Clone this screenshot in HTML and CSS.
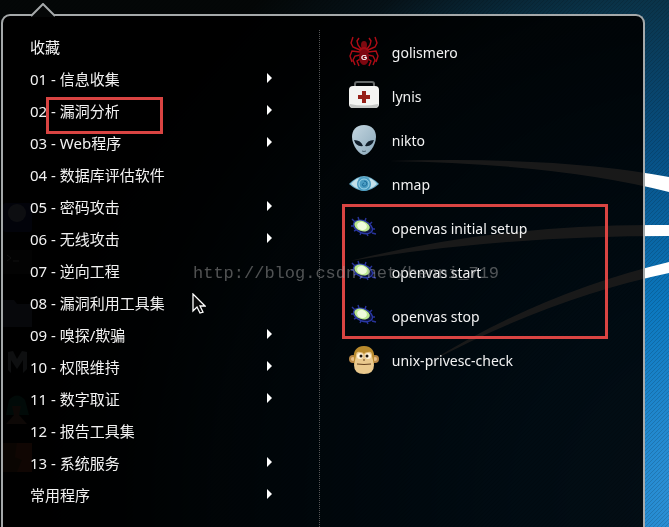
FILE: index.html
```html
<!DOCTYPE html>
<html lang="zh-CN">
<head>
  <meta charset="UTF-8" />
  <meta name="viewport" content="width=device-width, initial-scale=1" />
  <title>应用程序</title>
  <link rel="stylesheet" href="styles.css">
</head>
<body>

<!-- desktop wallpaper and the dock behind the menu -->
<svg class="wallpaper" viewBox="0 0 669 527" preserveAspectRatio="xMidYMid slice" aria-hidden="true">
  <defs>
    <radialGradient id="sky" gradientUnits="userSpaceOnUse" cx="720" cy="500" r="680">
      <stop offset="0" stop-color="#3597dc" />
      <stop offset="0.3" stop-color="#0b78bf" />
      <stop offset="0.52" stop-color="#075084" />
      <stop offset="0.74" stop-color="#0a344a" />
      <stop offset="0.88" stop-color="#061218" />
      <stop offset="1" stop-color="#040707" />
    </radialGradient>
    <pattern id="weave" width="4" height="4" patternUnits="userSpaceOnUse">
      <path d="M-1 1L1-1M0 4L4 0M3 5L5 3" stroke="#000" stroke-opacity="0.15" />
    </pattern>
  </defs>
  <rect width="669" height="527" fill="url(#sky)" />
  <rect width="669" height="527" fill="url(#weave)" />
  <g fill="#fff">
    <path d="M390 161Q560 156 669 177V192Q560 164 390 161Z" />
    <path d="M350 261Q500 223 669 225V236Q500 236 350 261Z" />
    <path d="M428 363Q540 293 669 262V273Q550 298 428 363Z" />
  </g>
  <g>
    <rect x="3" y="203" width="29" height="29" rx="3" fill="#1b2268" />
    <circle cx="17" cy="213" r="9" fill="#8890aa" />
    <rect x="3" y="250" width="29" height="24" fill="#20221f" />
    <path d="M7 255l4 3-4 3M13 261h6" stroke="#999" fill="none" />
    <path d="M3 300h11l3 4h15v23H3z" fill="#48506e" />
    <path d="M8 352l5-1 4 8 5-8 5 1v17l-4 4v-13l-6 9-6-9v13l-3-3z" fill="#8d98a0" />
    <path d="M9 400q8-9 16 0l4 15H6z" fill="#0e6a50" />
    <path d="M12 406h9l-2 9 8 9H6l8-9z" fill="#80533f" />
    <rect x="3" y="443" width="29" height="29" fill="#6c3b17" />
    <path d="M17 443h15v29H17l5-12-7-3z" fill="#a04020" />
  </g>
</svg>

<main class="menu">
  <svg class="notch" width="26" height="14" viewBox="0 0 26 14" aria-hidden="true">
    <path d="M1 13L13 1L25 13V14H1Z" fill="#050707" />
    <path d="M1 13L13 1L25 13" fill="none" stroke="#a5a9aa" stroke-width="2" />
  </svg>

  <nav class="categories">
    <ul>
      <li><a href="#favorites">收藏</a></li>
      <li><a class="more" href="#c01">01 - 信息收集</a></li>
      <li class="marked"><a class="more" href="#c02">02 - 漏洞分析</a><span class="mark mark-category"></span></li>
      <li><a class="more" href="#c03">03 - Web程序</a></li>
      <li><a href="#c04">04 - 数据库评估软件</a></li>
      <li><a class="more" href="#c05">05 - 密码攻击</a></li>
      <li><a class="more" href="#c06">06 - 无线攻击</a></li>
      <li><a href="#c07">07 - 逆向工程</a></li>
      <li><a href="#c08">08 - 漏洞利用工具集</a></li>
      <li><a class="more" href="#c09">09 - 嗅探/欺骗</a></li>
      <li><a class="more" href="#c10">10 - 权限维持</a></li>
      <li><a class="more" href="#c11">11 - 数字取证</a></li>
      <li><a href="#c12">12 - 报告工具集</a></li>
      <li><a class="more" href="#c13">13 - 系统服务</a></li>
      <li><a class="more" href="#common">常用程序</a></li>
    </ul>
  </nav>

  <section class="apps">
    <ul>
      <li>
        <a href="#golismero">
          <svg class="icon" viewBox="0 0 32 32" aria-hidden="true">
            <g fill="none" stroke="#b00c16" stroke-width="1.4">
              <path d="M12 14L5 11L3 7L5 1M20 14L27 11L29 7L27 1M13 13L10 9L9 5L11 2M19 13L22 9L23 5L21 2" />
              <path d="M12 16L4 15L2 20L4 26M20 16L28 15L30 20L28 26M12 19L7 20L5 24L7 29M20 19L25 20L27 24L25 29M12 23L9 25L11 30M20 23L23 25L21 30" />
            </g>
            <ellipse cx="16" cy="9" rx="3" ry="4" fill="#7d0a10" />
            <ellipse cx="16" cy="14" rx="5" ry="3" fill="#a00b14" />
            <ellipse cx="16" cy="21" rx="5" ry="8" fill="#7d0710" />
            <text class="spider-letter" x="16" y="24" text-anchor="middle">G</text>
          </svg>
          golismero
        </a>
      </li>
      <li>
        <a href="#lynis">
          <svg class="icon" viewBox="0 0 32 32" aria-hidden="true">
            <path d="M7 8V4Q7 2 9 2H24Q26 2 26 4V8" fill="none" stroke="#666a6a" stroke-width="2" />
            <rect x="1" y="6" width="30" height="22" rx="4" fill="#f4f4f2" />
            <path d="M2 24Q16 27 30 24V25Q30 28 27 28H5Q2 28 2 25Z" fill="#c5c7c5" />
            <path d="M14 11h4v4h4v4h-4v4h-4v-4h-4v-4h4z" fill="#972018" />
          </svg>
          lynis
        </a>
      </li>
      <li>
        <a href="#nikto">
          <svg class="icon" viewBox="0 0 32 32" aria-hidden="true">
            <defs>
              <linearGradient id="alien" x1="0" y1="0" x2="1" y2="1">
                <stop offset="0" stop-color="#c4d6e0" />
                <stop offset="1" stop-color="#8ba9bb" />
              </linearGradient>
            </defs>
            <path d="M16 1C8 1 4 6 4 13C4 22 12 31 16 31C20 31 28 22 28 13C28 6 24 1 16 1Z" fill="url(#alien)" />
            <path d="M6 16Q13 16 15 22Q8 23 6 16ZM26 16Q19 16 17 22Q24 23 26 16Z" fill="#101d29" />
            <path d="M14 27Q16 28 18 27" fill="none" stroke="#4c6472" />
          </svg>
          nikto
        </a>
      </li>
      <li>
        <a href="#nmap">
          <svg class="icon" viewBox="0 0 32 32" aria-hidden="true">
            <path d="M1 16Q9 8 16 8Q23 8 31 16Q23 23 16 23Q9 23 1 16Z" fill="#69aecb" />
            <path d="M3 16Q7 11 11 10Q8 16 11 21Q7 20 3 16ZM29 16Q25 11 21 10Q24 16 21 21Q25 20 29 16Z" fill="#c4e1eb" />
            <circle cx="16" cy="16" r="7" fill="#4a9cc2" />
            <circle cx="16" cy="16" r="5" fill="none" stroke="#9dd6ea" />
            <path d="M16 13Q19 13 19 16Q18 19 15 18Q13 16 16 15" fill="none" stroke="#1d6f9c" />
          </svg>
          nmap
        </a>
      </li>
      <li class="marked">
        <a href="#openvas-setup">
          <svg class="icon" viewBox="0 0 32 32" aria-hidden="true">
            <g id="openvas">
              <path d="M7 10L4 7M11 8L10 5M17 9L18 6M22 12L24 10M25 17L27 17M24 21L28 22M19 22L20 24M13 21L12 23M8 18L6 19M5 14L3 14" stroke="#29349b" stroke-width="1.4" />
              <ellipse cx="15" cy="15" rx="10" ry="6" transform="rotate(22 15 15)" fill="#10163f" stroke="#2938a6" stroke-width="1.4" />
              <ellipse cx="14" cy="14" rx="8" ry="5" transform="rotate(20 14 14)" fill="#b9e58e" />
              <ellipse cx="14" cy="14" rx="5" ry="4" transform="rotate(20 14 14)" fill="#effbdc" />
            </g>
          </svg>
          openvas initial setup
        </a>
        <span class="mark mark-openvas"></span>
      </li>
      <li>
        <a href="#openvas-start">
          <svg class="icon" viewBox="0 0 32 32" aria-hidden="true"><use href="#openvas" /></svg>
          openvas start
        </a>
      </li>
      <li>
        <a href="#openvas-stop">
          <svg class="icon" viewBox="0 0 32 32" aria-hidden="true"><use href="#openvas" /></svg>
          openvas stop
        </a>
      </li>
      <li>
        <a href="#unix-privesc-check">
          <svg class="icon" viewBox="0 0 32 32" aria-hidden="true">
            <circle cx="5" cy="15" r="4" fill="#b98846" />
            <circle cx="27" cy="15" r="4" fill="#b98846" />
            <circle cx="5" cy="15" r="2" fill="#e8bf86" />
            <circle cx="27" cy="15" r="2" fill="#e8bf86" />
            <path d="M16 2C8 2 5 8 6 14L6 20H26L26 14C27 8 24 2 16 2Z" fill="#b88a2d" />
            <path d="M8 12Q8 7 12 8Q15 8 16 10Q17 8 20 8Q24 7 24 12L26 21Q26 30 16 30Q6 30 6 21Z" fill="#eac98d" />
            <circle cx="12" cy="12" r="3" fill="#fff3db" />
            <circle cx="20" cy="12" r="3" fill="#fff3db" />
            <circle cx="13" cy="12" r="1.5" fill="#21170c" />
            <circle cx="19" cy="12" r="1.5" fill="#21170c" />
            <path d="M15 16h2M9 20Q16 21 23 20" stroke="#63401e" fill="none" />
          </svg>
          unix-privesc-check
        </a>
      </li>
    </ul>
  </section>
</main>

<p class="watermark">http://blog.csdn.net/henni_719</p>

<svg class="pointer" width="14" height="22" viewBox="0 0 14 22" aria-hidden="true">
  <path d="M1 1V18L5 14L8 20L11 19L8 13H13Z" fill="#0a0a0a" stroke="#fff" stroke-width="1.3" />
</svg>

</body>
</html>
```

FILE: styles.css
```css
body {
  margin: 0;
  min-height: 100vh;
  overflow: hidden;
  background: #040707;
  color: #f2f2f2;
  font-family: 'Noto Sans', 'Noto Sans CJK SC', sans-serif;
}
.wallpaper {
  position: fixed;
  top: 0;
  left: 0;
  width: 100%;
  height: 100%;
  z-index: -1;
}
.menu {
  position: relative;
  box-sizing: border-box;
  display: grid;
  grid-template-columns: 99fr 101fr;
  min-height: calc(100vh - 14px);
  margin: 14px 24px 0 1px;
  padding-top: 14px;
  border: 2px solid #a5a9aa;
  border-bottom: none;
  border-radius: 9px 9px 0 0;
  background: rgba(0, 0, 0, 0.9);
}
.notch {
  position: absolute;
  top: -13px;
  left: 27px;
}
ul {
  list-style: none;
  margin: 0;
  padding: 0;
}
a {
  display: flex;
  align-items: center;
  color: inherit;
  text-decoration: none;
}
.categories {
  border-right: 1px dotted #555;
}
.categories a {
  height: 32px;
  padding: 0 47px 0 27px;
  font-size: 15px;
}
/* submenu arrow */
.more::after {
  content: "";
  margin-left: auto;
  border-left: 5px solid #fff;
  border-top: 5px solid transparent;
  border-bottom: 5px solid transparent;
}
.apps a {
  height: 44px;
  padding-left: 28px;
  gap: 12px;
  font-size: 14px;
}
.icon {
  width: 32px;
  height: 32px;
}
.spider-letter {
  fill: #fff;
  font-family: 'Liberation Sans', sans-serif;
  font-size: 8px;
  font-weight: bold;
}
/* red annotation frames */
.marked {
  position: relative;
}
.mark {
  position: absolute;
  box-sizing: border-box;
  border: 3px solid #d94442;
  pointer-events: none;
}
.mark-category {
  top: 3px;
  left: 43px;
  width: 117px;
  height: 37px;
}
.mark-openvas {
  top: -2px;
  left: 22px;
  width: 266px;
  height: 135px;
}
.watermark {
  position: absolute;
  top: 262px;
  left: 193px;
  margin: 0;
  color: rgba(160, 160, 160, 0.5);
  font-family: 'Liberation Mono', monospace;
  font-size: 17px;
  line-height: 24px;
  pointer-events: none;
}
.pointer {
  position: absolute;
  top: 293px;
  left: 192px;
}
```
